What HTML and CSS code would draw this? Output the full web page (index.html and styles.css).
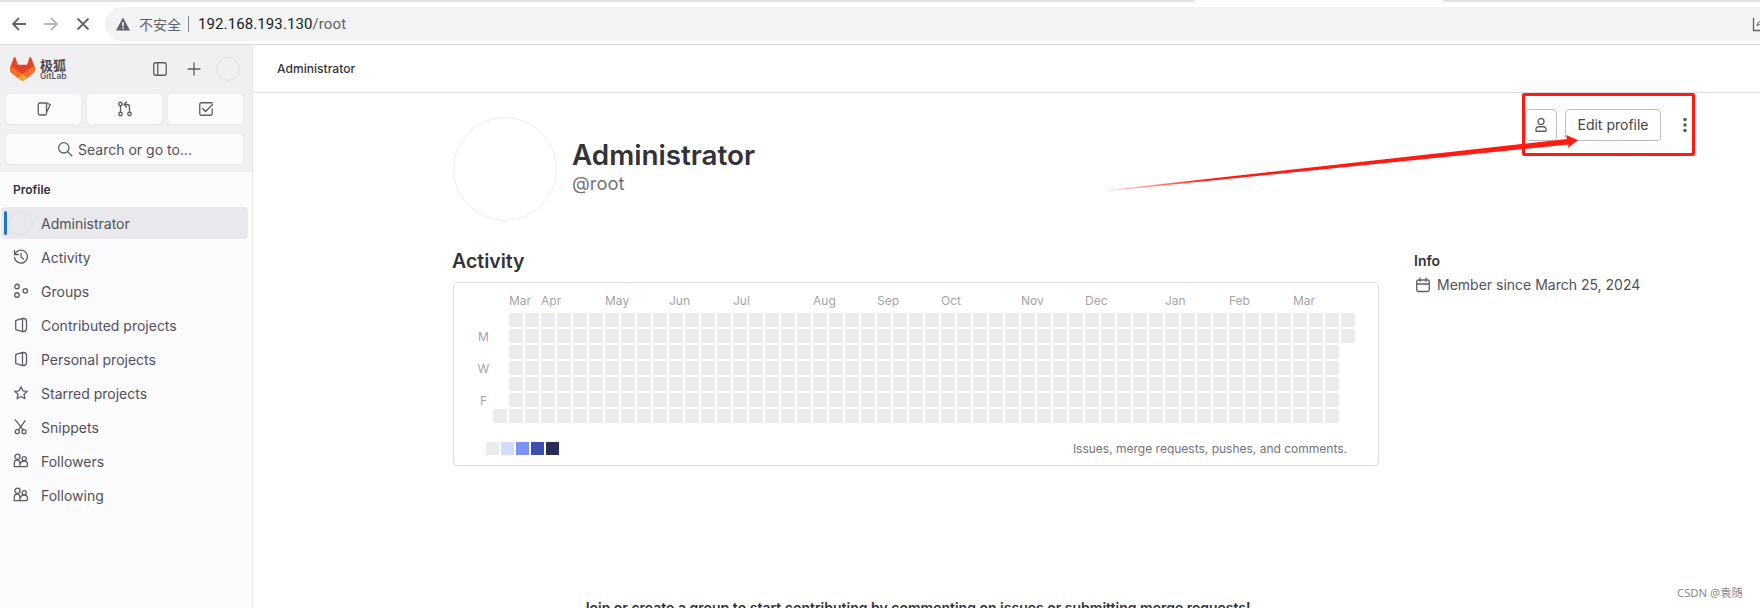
FILE: index.html
```html
<!DOCTYPE html>
<html lang="en">
<head>
<meta charset="utf-8">
<title>Administrator</title>
<link rel="stylesheet" href="styles.css">
</head>
<body>
<header class="chrome">
  <div class="tabstrip"><div class="tab-gray tab-left"></div><div class="tab-white"></div><div class="tab-gray tab-right"></div></div>
  <div class="toolbar">
    <svg class="tb-icon" viewBox="0 0 16 16"><path class="s-dark" d="M15 8H2M8 2L2 8l6 6"/></svg>
    <svg class="tb-icon" viewBox="0 0 16 16"><path class="s-light" d="M1 8h13M8 2l6 6-6 6"/></svg>
    <svg class="tb-icon" viewBox="0 0 16 16"><path class="s-dark" d="M2.500 2.500l11 11M13.500 2.500l-11 11"/></svg>
    <div class="omnibox">
      <svg class="warn" viewBox="0 0 14 14"><path class="warn-tri" d="M7 .5L14 13.500H0z"/><path class="warn-mark" d="M6.200 5h1.600v4.500H6.200zM6.200 10.400h1.600v1.500H6.200z"/></svg>
      <span class="insecure">不安全</span>
      <span class="sep"></span>
      <span class="url"><span class="host">192.168.193.130</span>/root</span>
      <svg class="share" viewBox="0 0 16 16"><path d="M1.500 2v12.500H14" fill="none" stroke="#5f6368" stroke-width="1.300"/><path d="M5 10c0-3 2-5 5-5V3l4 3.500L10 10V8c-2 0-4 .5-5 2z" fill="none" stroke="#5f6368"/></svg>
    </div>
  </div>
</header>

<div class="layout">
  <aside class="sidebar">
    <div class="side-top">
      <div class="brand-row">
        <svg class="tanuki" viewBox="0 0 25 24">
          <path fill="#E24329" d="M24.507 9.500l-.034-.09L21.082.562a.896.896 0 00-1.694.091l-2.290 7.010H7.825L5.535.653a.898.898 0 00-1.694-.090L.451 9.411.416 9.500a6.297 6.297 0 002.090 7.278l.012.010.030.022 5.160 3.867 2.560 1.935 1.554 1.176a1.051 1.051 0 001.268 0l1.555-1.176 2.560-1.935 5.197-3.890.014-.010A6.297 6.297 0 0024.507 9.500z"/>
          <path fill="#FC6D26" d="M24.507 9.500l-.034-.090a11.440 11.440 0 00-4.560 2.051l-7.447 5.632 4.742 3.584 5.197-3.890.014-.010A6.297 6.297 0 0024.507 9.500z"/>
          <path fill="#FCA326" d="M7.707 20.677l2.560 1.935 1.555 1.176a1.051 1.051 0 001.268 0l1.555-1.176 2.560-1.935-4.743-3.584-4.755 3.584z"/>
          <path fill="#FC6D26" d="M5.010 11.461a11.430 11.430 0 00-4.560-2.050L.416 9.500a6.297 6.297 0 002.090 7.278l.012.010.030.022 5.160 3.867 4.745-3.584-7.444-5.632z"/>
        </svg>
        <div class="brand-text"><span class="brand-cn">极狐</span><span class="brand-en">GitLab</span></div>
        <svg class="ico ico-panel" viewBox="0 0 16 16"><rect x="1.750" y="1.750" width="12.500" height="12.500" rx="2"/><path d="M5.750 2v12"/></svg>
        <svg class="ico ico-plus" viewBox="0 0 16 16"><path d="M8 2v12M2 8h12"/></svg>
        <span class="avatar-sm"></span>
      </div>
      <div class="quick-row">
        <button class="quick"><svg class="ico" viewBox="0 0 16 16"><path d="M10.500 2H4a1.750 1.750 0 0 0-1.750 1.750v8.500A1.750 1.750 0 0 0 4 14h5a1.500 1.500 0 0 0 1.500-1.500V2zM10.500 2.200l3.800 1.300-3.800 8"/></svg></button>
        <button class="quick"><svg class="ico" viewBox="0 0 16 16"><circle cx="3.500" cy="3" r="1.750"/><circle cx="3.500" cy="13" r="1.750"/><circle cx="12.500" cy="13" r="1.750"/><path d="M3.500 4.750v6.500M12.500 11.250V6a2.500 2.500 0 0 0-2.500-2.500H7.500M9.500 1L7 3.500 9.500 6"/></svg></button>
        <button class="quick"><svg class="ico" viewBox="0 0 16 16"><path d="M14.250 8v4.500a1.750 1.750 0 0 1-1.750 1.750h-9a1.750 1.750 0 0 1-1.750-1.750v-9A1.750 1.750 0 0 1 3.500 1.750h10.750M4.800 7.500L7.500 10.500 14.500 3.500"/></svg></button>
      </div>
      <button class="search"><svg class="ico" viewBox="0 0 16 16"><circle cx="6.800" cy="6.800" r="5.200"/><path d="M10.600 10.600L14.800 14.800"/></svg><span>Search or go to...</span></button>
    </div>
    <div class="side-label">Profile</div>
    <nav class="side-nav">
      <a class="nav-item active"><span class="avatar-sm nav-avatar"></span>Administrator</a>
      <a class="nav-item"><svg class="ico" viewBox="0 0 16 16"><path d="M1.500 1.500v4h4M1.800 5.500A6.500 6.500 0 1 1 1.500 8.500M8 4.500V8l2.500 2"/></svg>Activity</a>
      <a class="nav-item"><svg class="ico" viewBox="0 0 16 16"><circle cx="4" cy="3.500" r="2.250"/><circle cx="4" cy="12" r="2.250"/><circle cx="12.300" cy="7.800" r="2.250"/></svg>Groups</a>
      <a class="nav-item"><svg class="ico" viewBox="0 0 16 16"><path d="M9.500 1.300L3.200 3.300a.8.800 0 0 0-.5.800v7.800a.8.800 0 0 0 .5.800l6.300 2zM9.500 1.500h1a3 3 0 0 1 3 3v7a3 3 0 0 1-3 3h-1"/></svg>Contributed projects</a>
      <a class="nav-item"><svg class="ico" viewBox="0 0 16 16"><path d="M9.500 1.300L3.200 3.300a.8.800 0 0 0-.5.800v7.800a.8.800 0 0 0 .5.800l6.300 2zM9.500 1.500h1a3 3 0 0 1 3 3v7a3 3 0 0 1-3 3h-1"/></svg>Personal projects</a>
      <a class="nav-item"><svg class="ico" viewBox="0 0 16 16"><path d="M8 1.800l1.900 4 4.400.5-3.300 3 .9 4.400L8 11.500l-3.900 2.200.9-4.400-3.300-3 4.400-.5z"/></svg>Starred projects</a>
      <a class="nav-item"><svg class="ico" viewBox="0 0 16 16"><circle cx="4.300" cy="12.700" r="2"/><circle cx="11" cy="12.700" r="2"/><path d="M2.200 .8l8.100 10M12 1.800L5.600 10.800"/></svg>Snippets</a>
      <a class="nav-item"><svg class="ico" viewBox="0 0 16 16"><circle cx="4.500" cy="3.800" r="2.600"/><circle cx="11.200" cy="5.800" r="2.100"/><path d="M1.300 13.700V10a2.800 2.800 0 0 1 5.600 0v3.700zM6.900 13.700h5.600a2 2 0 0 0 2-2v-1a3 3 0 0 0-3-2.500h-.5a3.800 3.800 0 0 0-3.500 2"/></svg>Followers</a>
      <a class="nav-item"><svg class="ico" viewBox="0 0 16 16"><circle cx="4.500" cy="3.800" r="2.600"/><circle cx="11.200" cy="5.800" r="2.100"/><path d="M1.300 13.700V10a2.800 2.800 0 0 1 5.600 0v3.700zM6.900 13.700h5.600a2 2 0 0 0 2-2v-1a3 3 0 0 0-3-2.500h-.5a3.800 3.800 0 0 0-3.500 2"/></svg>Following</a>
    </nav>
  </aside>

  <main class="main">
    <div class="crumb"><span>Administrator</span></div>
    <div class="content">
      <section class="profile-head">
        <div class="avatar-lg"></div>
        <div class="names">
          <h1 class="name">Administrator</h1>
          <div class="handle">@root</div>
        </div>
        <div class="actions">
          <button class="btn btn-icon"><svg class="ico" viewBox="0 0 16 16"><circle cx="8" cy="4.500" r="3"/><path d="M3 14.250v-2a2.500 2.500 0 0 1 2.500-2.500h5a2.500 2.500 0 0 1 2.500 2.500v2z"/></svg></button>
          <button class="btn">Edit profile</button>
          <button class="kebab"><svg class="kebab-svg" viewBox="0 0 16 16"><circle cx="8" cy="2.500" r="1.800"/><circle cx="8" cy="8" r="1.800"/><circle cx="8" cy="13.500" r="1.800"/></svg></button>
        </div>
      </section>
      <div class="columns">
        <section class="activity">
          <h2 class="h-activity">Activity</h2>
          <div class="card">
            <div class="months">
              <span class="m2">Mar</span><span class="m4">Apr</span><span class="m4">May</span><span class="m4">Jun</span><span class="m5">Jul</span><span class="m4">Aug</span><span class="m4">Sep</span><span class="m5">Oct</span><span class="m4">Nov</span><span class="m5">Dec</span><span class="m4">Jan</span><span class="m4">Feb</span><span class="m4">Mar</span>
            </div>
            <div class="cal-body">
              <div class="days"><span></span><span>M</span><span></span><span>W</span><span></span><span>F</span><span></span></div>
              <div class="cells" id="cells"></div>
            </div>
            <div class="legend-row">
              <div class="legend"><i class="l0"></i><i class="l1"></i><i class="l2"></i><i class="l3"></i><i class="l4"></i></div>
              <span class="caption">Issues, merge requests, pushes, and comments.</span>
            </div>
          </div>
        </section>
        <section class="info">
          <h3 class="h-info">Info</h3>
          <div class="member"><svg class="ico" viewBox="0 0 16 16"><rect x="1.750" y="3" width="12.500" height="11.500" rx="1.500"/><path d="M5 .8v3.500M11 .8v3.500M2 7h12"/></svg>Member since March 25, 2024</div>
        </section>
      </div>
      <p class="join">Join or create a group to start contributing by commenting on issues or submitting merge requests!</p>
    </div>
  </main>
</div>

<div class="red-box"></div>
<svg class="red-arrow" viewBox="0 0 1760 608">
  <defs><linearGradient id="fade" gradientUnits="userSpaceOnUse" x1="1108" y1="191" x2="1210" y2="180"><stop offset="0" stop-color="#ff1a12" stop-opacity=".15"/><stop offset="1" stop-color="#ff1a12"/></linearGradient></defs>
  <path fill="url(#fade)" d="M1108 190L1567 139 1566 135 1578 140 1568 148 1568.500 144.500 1108 191z"/>
</svg>
<div class="watermark">CSDN @袁随</div>
<script src="calendar.js"></script>
</body>
</html>
```
FILE: styles.css
```css
* { box-sizing: border-box; }
html, body { margin: 0; height: 608px; overflow: hidden; background: #fff; }
body { font-family: Inter, "Noto Sans CJK SC", sans-serif; font-size: 14px; color: #333238; position: relative; }
button { font: inherit; color: inherit; cursor: pointer; }
.ico { width: 16px; height: 16px; flex: none; fill: none; stroke: #5e5d64; stroke-width: 1.300; stroke-linecap: round; stroke-linejoin: round; }

/* browser chrome */
.chrome { height: 45px; border-bottom: 1px solid #dcdcdc; background: #fff; }
.tabstrip { height: 2px; display: flex; }
.tab-gray { background: #dee1e6; }
.tab-left { width: 1195px; }
.tab-white { width: 248px; }
.tab-right { flex: 1; }
.toolbar { height: 42px; display: flex; align-items: center; padding: 4px 0 2px 11px; gap: 16px; }
.tb-icon { width: 16px; height: 16px; flex: none; fill: none; stroke-width: 1.800; }
.s-dark { stroke: #5f6368; }
.s-light { stroke: #b4b6ba; }
.omnibox { flex: 1; height: 34px; margin-left: -2px; background: #f1f3f4; border-radius: 17px 0 0 17px; display: flex; align-items: center; padding-left: 11px; overflow: hidden; font-family: Roboto, "Noto Sans CJK SC", sans-serif; }
.warn { width: 14px; height: 14px; flex: none; }
.warn-tri { fill: #5f6368; }
.warn-mark { fill: #f1f3f4; }
.insecure { margin-left: 9px; color: #5f6368; font-size: 14px; font-family: "Noto Sans CJK SC", sans-serif; }
.sep { width: 1px; height: 16px; background: #888; margin-left: 7px; }
.url { margin-left: 9px; font-size: 15px; color: #5f6368; letter-spacing: .1px; }
.host { color: #202124; }
.share { width: 16px; height: 16px; flex: none; margin-left: auto; margin-right: -8px; }

/* layout */
.layout { display: flex; height: 563px; }
.sidebar { width: 253px; flex: none; background: #fbfafd; border-right: 1px solid #e6e6e8; }
.side-top { height: 127px; background: #f0f0f2; padding: 12px 9px 8px 6px; }
.brand-row { display: flex; align-items: center; height: 24px; }
.tanuki { width: 25px; height: 24px; margin-left: 4px; flex: none; }
.brand-text { margin-left: 5px; display: flex; flex-direction: column; align-items: flex-start; line-height: 1; color: #4a4950; }
.brand-cn { font-family: "Noto Sans CJK SC", sans-serif; font-size: 13px; font-weight: 700; line-height: 14px; }
.brand-en { font-size: 8.500px; font-weight: 600; line-height: 9px; color: #5e5d64; }
.ico-panel { margin-left: auto; }
.ico-plus { margin-left: 18px; }
.avatar-sm { width: 24px; height: 24px; border-radius: 50%; border: 1px solid #e1e1e3; background: #f0f0f2; flex: none; }
.brand-row .avatar-sm { margin-left: 14px; margin-right: 3px; }
.quick-row { display: flex; gap: 6px; margin-top: 13px; }
.quick { width: 75px; height: 30px; padding: 0; background: #fbfafd; border: 1px solid #fbfafd; border-radius: 4px; box-shadow: 0 0 0 .5px #e9e9ec; display: flex; align-items: center; justify-content: center; }
.search { width: 237px; height: 30px; margin-top: 10px; padding: 0; background: #fbfafd; border: 1px solid #fbfafd; border-radius: 4px; box-shadow: 0 0 0 .5px #e9e9ec; display: flex; align-items: center; justify-content: center; gap: 5px; color: #535158; }
.side-label { font-size: 12px; font-weight: 600; color: #333238; padding-left: 13px; height: 35px; line-height: 36px; }
.side-nav { display: flex; flex-direction: column; gap: 2px; padding: 0 4px 0 1px; }
.nav-item { height: 32px; display: flex; align-items: center; gap: 12px; padding-left: 12px; color: #535158; border-radius: 4px; position: relative; }
.active { background: #e9e8ec; padding-left: 8px; gap: 8px; }
.active::before { content: ""; position: absolute; left: 3px; top: 4px; bottom: 4px; width: 3px; background: #1f75cb; border-radius: 2px; }
.nav-avatar { background: transparent; }

/* main */
.main { flex: 1; min-width: 0; }
.crumb { height: 48px; border-bottom: 1px solid #dcdcde; padding-left: 24px; display: flex; align-items: center; font-size: 12px; font-weight: 500; color: #333238; letter-spacing: .05px; }
.content { padding-left: 200px; padding-right: 59px; }
.profile-head { display: flex; align-items: flex-start; padding-top: 16px; }
.avatar-lg { width: 104px; height: 104px; margin-top: 8px; border-radius: 50%; border: 1px solid #ececef; background: #fff; flex: none; }
.names { margin-left: 15px; margin-top: 29px; }
.name { margin: 0; font-size: 27.800px; line-height: 34px; font-weight: 600; color: #333238; }
.handle { font-size: 18.400px; line-height: 22px; color: #737278; }
.actions { margin-left: auto; display: flex; align-items: center; gap: 8px; }
.btn { height: 32px; padding: 0 12px 1px; background: #fff; border: 1px solid #bfbfc3; border-radius: 4px; color: #444349; display: flex; align-items: center; width: 96px; justify-content: center; white-space: nowrap; }
.btn-icon { width: 32px; padding: 0; }
.kebab { width: 32px; height: 32px; padding: 0; border: 0; background: transparent; display: flex; align-items: center; justify-content: center; }
.kebab-svg { width: 16px; height: 16px; fill: #5e5d64; }
.columns { display: flex; gap: 35px; margin-top: 28px; }
.activity { width: 926px; flex: none; }
.h-activity { margin: 0 0 8px; font-size: 19.500px; line-height: 25px; font-weight: 600; color: #333238; margin-left: -1px; }
.card { height: 184px; border: 1px solid #dcdcde; border-radius: 4px; padding-top: 10px; }
.months { display: flex; height: 16px; padding-left: 55px; font-size: 12px; line-height: 16px; color: #a4a3a8; }
.m2 { width: 32px; flex: none; }
.m4 { width: 64px; flex: none; }
.m5 { width: 80px; flex: none; }
.cal-body { display: flex; margin-top: 4px; padding-left: 20px; }
.days { width: 19px; flex: none; display: grid; grid-template-rows: repeat(7, 14px); row-gap: 2px; font-size: 12px; line-height: 16px; text-align: center; color: #a4a3a8; }
.cells { display: grid; grid-auto-flow: column; grid-template-rows: repeat(7, 14px); grid-auto-columns: 14px; gap: 2px; }
.cell { background: #ececef; }
.legend-row { display: flex; justify-content: space-between; align-items: center; height: 13px; margin-top: 19px; padding: 0 31px 0 32px; }
.legend { display: flex; gap: 2px; }
.legend i { width: 13px; height: 13px; display: block; }
.l0 { background: #ececef; }
.l1 { background: #d2dcff; }
.l2 { background: #7992f5; }
.l3 { background: #3f51ae; }
.l4 { background: #2a2b59; }
.caption { font-size: 12px; color: #737278; white-space: nowrap; }
.info { flex: 1; padding-top: 2px; }
.h-info { margin: 0 0 4px; font-size: 14px; line-height: 20px; font-weight: 600; color: #333238; }
.member { display: flex; align-items: center; gap: 6px; line-height: 20px; color: #535158; padding-left: 1px; }
.join { width: 926px; margin: 132px 0 0; text-align: center; line-height: 20px; font-weight: 600; color: #333238; white-space: nowrap; }

/* screenshot annotations */
.red-box { position: absolute; left: 1522px; top: 93px; width: 173px; height: 63px; border: 3px solid #ff1a12; border-radius: 2px; }
.red-arrow { position: absolute; left: 0; top: 0; width: 1760px; height: 608px; pointer-events: none; }
.watermark { position: absolute; left: 1677px; top: 586px; font-family: "Noto Sans", "Noto Sans CJK SC", sans-serif; font-size: 11.300px; line-height: 14px; color: #8a8a8a; }
```
FILE: calendar.js
```js
var grid = document.getElementById('cells');
for (var col = 0; col < 54; col++) {
  for (var row = 0; row < 7; row++) {
    var on = col === 0 ? row === 6 : col === 53 ? row < 2 : true;
    var el = document.createElement('div');
    if (on) el.className = 'cell';
    grid.appendChild(el);
  }
}
```
